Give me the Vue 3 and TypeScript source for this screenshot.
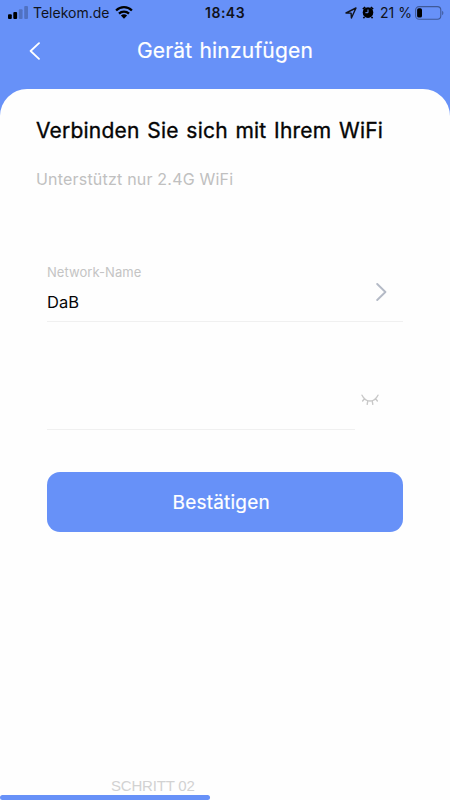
<script setup lang="ts">
import { ref } from 'vue'

const network = ref('DaB')
const password = ref('')
const progress = ref(210 / 450)
</script>

<template>
  <div class="screen">
    <div class="status">
      <svg class="signal" width="20" height="13" viewBox="0 0 20 13">
        <rect x="0" y="8.3" width="3.8" height="4.7" rx="1" />
        <rect x="5.3" y="6" width="3.8" height="7" rx="1" />
        <rect class="dim" x="10.8" y="3.2" width="3.8" height="9.8" rx="1" />
        <rect class="dim" x="16.2" y="0" width="3.8" height="13" rx="1" />
      </svg>
      <span class="carrier">Telekom.de</span>
      <svg class="wifi" width="18" height="13" viewBox="0 0 18 13">
        <path class="arc" d="M1.1 4.5C5.5.1 12.5.1 16.9 4.5" />
        <path class="arc" d="M4 7.7C6.8 5 11.2 5 14 7.7" />
        <path d="M5.9 9.4c1.8-1.5 4.4-1.5 6.2 0L9 12.8Z" />
      </svg>
      <span class="clock">18:43</span>
      <svg class="location" width="12" height="12" viewBox="0 0 12 12">
        <path d="M1 6 11 1 6.4 11 6.1 6.1Z" />
      </svg>
      <svg class="alarm" width="12" height="13" viewBox="0 0 12 13">
        <circle cx="6" cy="6.6" r="5.3" />
        <path class="bells" d="M.9 3.2 3.2 1M11.1 3.2 8.8 1M2.5 11 1.4 12.1M9.5 11l1.1 1.1" />
        <path class="hands" d="M6 3.5v3.2H3.4" />
      </svg>
      <span class="percent">21 %</span>
      <svg class="battery" width="29" height="14" viewBox="0 0 29 14">
        <rect class="shell" x=".6" y=".6" width="25.2" height="12.6" rx="3.5" />
        <rect x="2.1" y="2.2" width="4.9" height="9.4" rx="1.7" />
        <path class="cap" d="M27.2 4.8c1.6.8 1.6 3.6 0 4.4Z" />
      </svg>
    </div>

    <header class="nav">
      <svg class="back" width="12" height="18" viewBox="0 0 12 18">
        <path d="M10 1.2 1.6 9l8.4 7.8" />
      </svg>
      <h1>Gerät hinzufügen</h1>
    </header>

    <main class="sheet">
      <h2>Verbinden Sie sich mit Ihrem WiFi</h2>
      <p class="hint">Unterstützt nur 2.4G WiFi</p>

      <section class="network">
        <div class="field">
          <div class="label">Network-Name</div>
          <div class="value">{{ network }}</div>
        </div>
        <svg width="11" height="18" viewBox="0 0 11 18">
          <path d="M1.2 1 9.4 9l-8.2 8" />
        </svg>
      </section>

      <section class="password">
        <div class="entry">{{ password }}</div>
        <svg width="18" height="12" viewBox="0 0 18 12">
          <path d="M1 1.2c4 7.8 12 7.8 16 0M3.5 4.7 1.6 7M6.8 6.8l-.6 3.6M11.2 6.8l.6 3.6M14.5 4.7 16.4 7" />
        </svg>
      </section>

      <button class="confirm" type="button">Bestätigen</button>

      <footer>
        <span class="step">SCHRITT 02</span>
        <div class="progress" :style="{ width: `${progress * 100}%` }"></div>
      </footer>
    </main>
  </div>
</template>

<style>
body {
  margin: 0;
}
</style>

<style scoped>
.screen {
  box-sizing: border-box;
  width: 450px;
  height: 800px;
  overflow: hidden;
  display: flex;
  flex-direction: column;
  background: #6791f8;
  font-family: Inter, "Liberation Sans", sans-serif;
  color: #050505;
}
svg {
  display: block;
  flex: none;
}
.status {
  height: 25px;
  display: flex;
  align-items: center;
  font-size: 14px;
  line-height: 25px;
  white-space: nowrap;
  color: #10131c;
}
.signal {
  margin-left: 8px;
}
.signal .dim {
  opacity: 0.22;
}
.carrier {
  width: 78px;
  margin-left: 5px;
}
.wifi {
  margin-left: 4px;
}
.arc {
  fill: none;
  stroke: #000;
  stroke-width: 2.3;
}
.clock {
  width: 41px;
  margin-left: 72px;
  font-weight: 600;
  letter-spacing: 0.5px;
}
.location {
  margin-left: 99px;
  fill: none;
  stroke: #10131c;
  stroke-width: 1.4;
  stroke-linejoin: round;
}
.alarm {
  margin-left: 5px;
}
.bells {
  stroke: #000;
  stroke-width: 1.6;
}
.hands {
  fill: none;
  stroke: #6791f8;
  stroke-width: 1;
}
.percent {
  width: 32px;
  margin-left: 6px;
}
.battery {
  margin-left: 3px;
}
.shell {
  fill: none;
  stroke: #3f5998;
  stroke-width: 1.1;
}
.cap {
  fill: #3f5998;
}
.nav {
  position: relative;
  height: 64px;
  display: flex;
  align-items: flex-start;
  justify-content: center;
}
.back {
  position: absolute;
  left: 29px;
  top: 17px;
  fill: none;
  stroke: #fff;
  stroke-width: 1.8;
  stroke-linecap: round;
  stroke-linejoin: round;
}
h1 {
  margin: 11px 0 0;
  font-size: 21px;
  line-height: 30px;
  font-weight: 400;
  letter-spacing: 0.2px;
  word-spacing: 1px;
  color: #fff;
  -webkit-text-stroke: 0.2px #fff;
}
.sheet {
  flex: 1;
  display: flex;
  flex-direction: column;
  background: #fefefe;
  border-radius: 27px 27px 0 0;
}
h2 {
  margin: 27px 0 0 36px;
  font-size: 21px;
  line-height: 30px;
  font-weight: 400;
  letter-spacing: 0.2px;
  word-spacing: 1.6px;
  white-space: nowrap;
  -webkit-text-stroke: 0.35px #050505;
}
.hint {
  margin: 21px 0 0 36px;
  font-size: 16px;
  line-height: 24px;
  letter-spacing: 0.2px;
  color: #c0c0c0;
}
.network {
  box-sizing: border-box;
  width: 356px;
  height: 60px;
  margin: 71px 0 0 47px;
  padding-right: 16px;
  display: flex;
  align-items: center;
  justify-content: space-between;
  border-bottom: 1px solid #f0f0f0;
}
.field {
  padding-bottom: 7px;
}
.network svg {
  fill: none;
  stroke: #b4bac6;
  stroke-width: 1.9;
  stroke-linecap: round;
  stroke-linejoin: round;
}
.label {
  font-size: 13px;
  line-height: 20px;
  letter-spacing: 0.06px;
  color: #c4c4c4;
}
.value {
  margin-top: 8px;
  font-size: 16.5px;
  line-height: 24px;
}
.password {
  height: 60px;
  margin: 48px 0 0 47px;
  display: flex;
  align-items: center;
}
.entry {
  box-sizing: border-box;
  width: 308px;
  height: 60px;
  border-bottom: 1px solid #f0f0f0;
}
.password svg {
  margin-left: 6px;
  fill: none;
  stroke: #c8c8c8;
  stroke-width: 1.4;
  stroke-linecap: round;
}
.confirm {
  width: 356.5px;
  height: 60px;
  margin: 42.4px 0 0 46.5px;
  padding: 2px 7px 0 0;
  border: 0;
  border-radius: 13px;
  background: #6791f8;
  color: #fff;
  font: 400 19px/58px Inter, "Liberation Sans", sans-serif;
  letter-spacing: 0.2px;
  -webkit-text-stroke: 0.2px #fff;
}
footer {
  margin-top: auto;
}
.step {
  display: block;
  margin-left: 111px;
  font-family: "Liberation Sans", Arial, sans-serif;
  font-size: 15px;
  line-height: 18px;
  letter-spacing: -0.2px;
  color: #d2d2d2;
}
.progress {
  height: 5px;
  border-radius: 3px;
  background: #6791f8;
}
</style>
